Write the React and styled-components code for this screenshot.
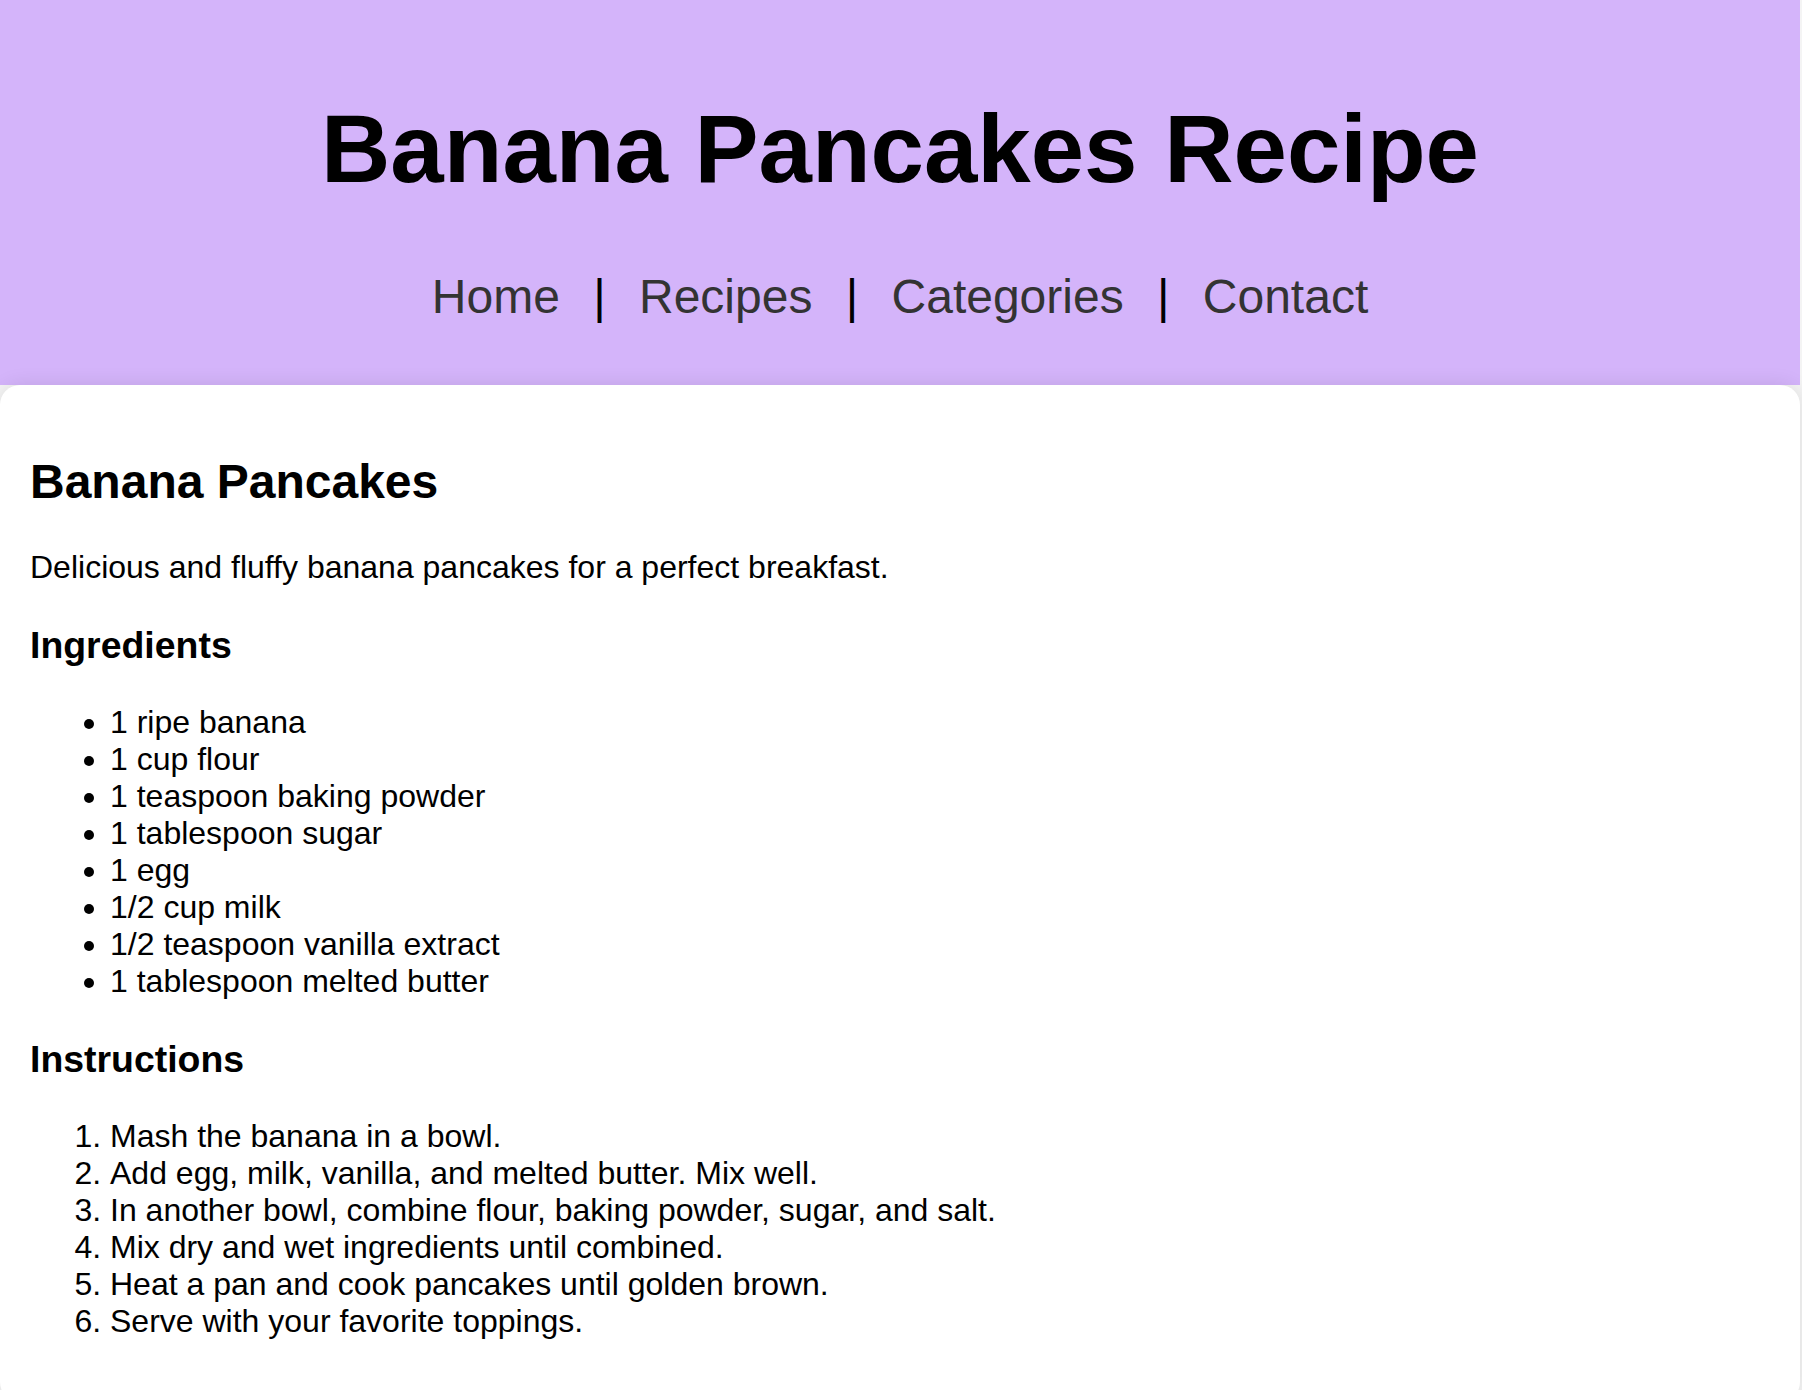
import React from "react";
import styled, { createGlobalStyle } from "styled-components";

const GlobalStyle = createGlobalStyle`
  html, body {
    margin: 0;
    padding: 0;
    background: #f4f4f4;
  }
  body {
    font-family: "Liberation Sans", Arial, sans-serif;
    font-size: 32px;
    line-height: normal;
    color: #000;
  }
`;

const Page = styled.div`
  width: 1800px;
`;

const Header = styled.header`
  background: #d4b4fa;
  text-align: center;
  padding: 30px 0 61px;
`;

const Title = styled.h1`
  font-size: 96px;
  font-weight: bold;
  margin: 64.32px 0;
`;

const Nav = styled.nav`
  font-size: 48px;
  color: #000;
`;

const NavLink = styled.a`
  color: #333;
  text-decoration: none;
  margin: 0 20px;
`;

const Card = styled.main`
  background: #fff;
  border-radius: 20px;
  box-shadow: 0 0 20px rgba(0, 0, 0, 0.1);
  padding: 30px;
`;

const RecipeTitle = styled.h2`
  font-size: 48px;
  margin: 39.84px 0;
`;

const Lead = styled.p`
  font-size: 32px;
  margin: 32px 0;
`;

const Section = styled.h3`
  font-size: 37.44px;
  margin: 37.44px 0;
`;

const List = styled.ul`
  margin: 32px 0;
  padding-left: 80px;
`;

const Steps = styled.ol`
  margin: 32px 0;
  padding-left: 80px;
`;

const links = ["Home", "Recipes", "Categories", "Contact"];

const ingredients = [
  "1 ripe banana",
  "1 cup flour",
  "1 teaspoon baking powder",
  "1 tablespoon sugar",
  "1 egg",
  "1/2 cup milk",
  "1/2 teaspoon vanilla extract",
  "1 tablespoon melted butter",
];

const steps = [
  "Mash the banana in a bowl.",
  "Add egg, milk, vanilla, and melted butter. Mix well.",
  "In another bowl, combine flour, baking powder, sugar, and salt.",
  "Mix dry and wet ingredients until combined.",
  "Heat a pan and cook pancakes until golden brown.",
  "Serve with your favorite toppings.",
];

export default function App() {
  return (
    <Page>
      <GlobalStyle />
      <Header>
        <Title>Banana Pancakes Recipe</Title>
        <Nav>
          {links.map((l, i) => (
            <React.Fragment key={l}>
              {i > 0 && " | "}
              <NavLink href="#">{l}</NavLink>
            </React.Fragment>
          ))}
        </Nav>
      </Header>
      <Card>
        <RecipeTitle>Banana Pancakes</RecipeTitle>
        <Lead>Delicious and fluffy banana pancakes for a perfect breakfast.</Lead>
        <Section>Ingredients</Section>
        <List>
          {ingredients.map((t) => (
            <li key={t}>{t}</li>
          ))}
        </List>
        <Section>Instructions</Section>
        <Steps>
          {steps.map((t) => (
            <li key={t}>{t}</li>
          ))}
        </Steps>
      </Card>
    </Page>
  );
}
